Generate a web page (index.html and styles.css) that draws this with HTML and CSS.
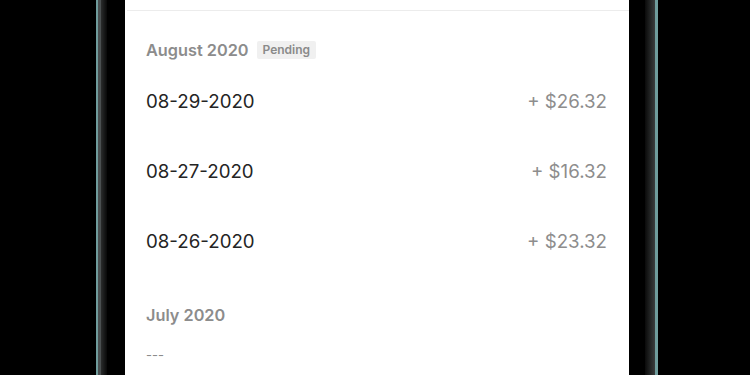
FILE: index.html
```html
<!DOCTYPE html>
<html>
<head>
<meta charset="utf-8">
<link rel="stylesheet" href="styles.css">
</head>
<body>
<div class="device">
  <div class="bezel-left">
    <div class="edge-teal"></div>
    <div class="edge-gray"></div>
    <div class="edge-dark"></div>
  </div>
  <main class="screen">
    <div class="topbar"></div>
    <section class="month">
      <h2 class="month-title">August 2020 <span class="badge">Pending</span></h2>
      <div class="row"><span class="date">08-29-2020</span><span class="amount">+ $26.32</span></div>
      <div class="row"><span class="date">08-27-2020</span><span class="amount">+ $16.32</span></div>
      <div class="row"><span class="date">08-26-2020</span><span class="amount">+ $23.32</span></div>
    </section>
    <section class="month july">
      <h2 class="month-title">July 2020</h2>
      <div class="empty">---</div>
    </section>
  </main>
  <div class="bezel-right">
    <div class="edge-dark-r"></div>
    <div class="edge-teal-r"></div>
  </div>
</div>
</body>
</html>
```

FILE: styles.css
```css
html, body {
  margin: 0;
  padding: 0;
  background: #000;
  width: 750px;
  height: 375px;
  overflow: hidden;
  font-family: "Inter", "Lato", sans-serif;
}
.device {
  display: flex;
  height: 375px;
}
.bezel-left {
  width: 125px;
  display: flex;
  padding-left: 96px;
  box-sizing: border-box;
}
.edge-teal { width: 2px; background: #6f9c9c; }
.edge-gray { width: 3px; background: #4a4f50; }
.edge-dark { width: 6px; background: linear-gradient(to right, #2a2c2c, #080808); }
.screen {
  width: 504px;
  background: #fff;
  display: flex;
  flex-direction: column;
}
.topbar {
  height: 10px;
  border-bottom: 1px solid #ececec;
  margin-left: 2px;
}
.month {
  padding: 0 22px 0 21px;
}
.month-title {
  margin: 0;
  font-size: 16.3px;
  font-weight: 600;
  color: #8c8c8c;
  display: flex;
  align-items: center;
  height: 20px;
  margin-top: 29px;
}
.badge {
  margin-left: 8px;
  background: #f0f0f0;
  color: #8a8a8a;
  font-size: 12px;
  font-weight: 600;
  padding: 2px 6px;
  border-radius: 2px;
  line-height: 14px;
}
.row {
  display: flex;
  justify-content: space-between;
  align-items: center;
  height: 70px;
}
.month .row:first-of-type { margin-top: 6px; }
.date {
  font-size: 18.7px;
  color: #242424;
}
.amount {
  font-size: 18.7px;
  color: #8d8d8d;
}
.july .month-title { margin-top: 29px; }
.empty {
  margin-top: 22px;
  color: #8c8c8c;
  font-size: 13px;
  letter-spacing: 0;
}
.bezel-right {
  flex: 1;
  display: flex;
  padding-left: 16px;
}
.edge-dark-r { width: 10px; background: linear-gradient(to right, #0a0a0a, #3a3d3d); }
.edge-teal-r { width: 3px; background: #6f9c9c; }
```
